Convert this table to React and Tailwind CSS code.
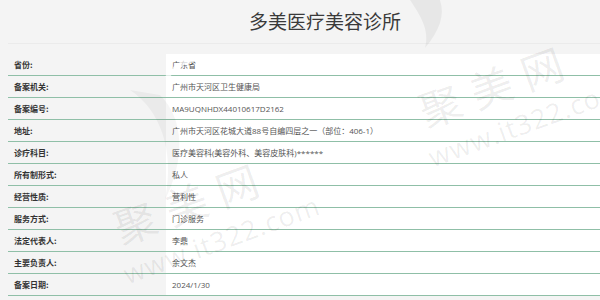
import React from "react";

const rows = [
  ["省份:", "广东省"],
  ["备案机关:", "广州市天河区卫生健康局"],
  ["备案编号:", "MA9UQNHDX44010617D2162"],
  ["地址:", "广州市天河区花城大道88号自编四层之一（部位：406-1）"],
  ["诊疗科目:", "医疗美容科(美容外科、美容皮肤科)******"],
  ["所有制形式:", "私人"],
  ["经营性质:", "营利性"],
  ["服务方式:", "门诊服务"],
  ["法定代表人:", "李鼎"],
  ["主要负责人:", "余文杰"],
  ["备案日期:", "2024/1/30"],
];

function Watermark({ className }) {
  return (
    <div className={"pointer-events-none absolute flex flex-col items-center -rotate-[20deg] -translate-x-1/2 -translate-y-1/2 " + className}>
      <div className="text-[42px] leading-none tracking-[12px] text-black/[0.07] font-['Noto_Sans_CJK_SC',sans-serif]">聚美网</div>
      <div className="mt-[12px] ml-[30px] text-[27px] leading-none tracking-[1px] text-black/[0.07] font-['Open_Sans',sans-serif]">www.it322.com</div>
    </div>
  );
}

export default function App() {
  return (
    <div className="relative w-[600px] h-[300px] overflow-hidden bg-[#f4f4f4] font-['Open_Sans','Noto_Sans_CJK_SC',sans-serif]">
      <div className="pl-2">
        <div className="h-[44px] border-b border-[#ebebeb] flex items-center justify-center pl-[42px]">
          <h1 className="text-[19px] leading-none text-[#3a3a3a] font-['Noto_Sans_CJK_SC',sans-serif] pb-[3px]">多美医疗美容诊所</h1>
        </div>
        <div className="mt-[10px]">
          {rows.map(([k, v]) => (
            <div key={k} className="grid grid-cols-[158px_1fr] h-[22px] border-b border-[#8fbfa7]">
              <div className="flex items-center pl-[6px] text-[8px] font-bold text-[#333] font-['Noto_Sans_CJK_SC',sans-serif]">{k}</div>
              <div className="flex items-center pl-[6px] bg-white text-[8px] text-[#555]">{v}</div>
            </div>
          ))}
        </div>
      </div>

      <svg className="pointer-events-none absolute inset-0" width="600" height="300" viewBox="0 0 600 300">
        <path d="M410 0 C 420 15, 430 30, 425 48 C 440 30, 445 15, 440 0 Z" fill="rgba(0,0,0,0.05)" />
        <path d="M130 90 C 160 110, 175 150, 165 200 C 185 160, 185 120, 160 95 Z" fill="rgba(0,0,0,0.04)" />
        <path d="M165 77 C 170 66, 185 58, 200 56 L 200 60 C 188 62, 176 68, 170 77 Z" fill="rgba(255,255,255,0.7)" />
      </svg>

      <Watermark className="left-[503px] top-[102px]" />
      <Watermark className="left-[198px] top-[219px]" />
    </div>
  );
}
